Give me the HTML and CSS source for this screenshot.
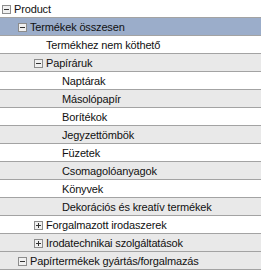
FILE: index.html
```html
<!DOCTYPE html>
<html lang="hu">
<head>
  <meta charset="UTF-8" />
  <title>Product</title>
  <link rel="stylesheet" href="styles.css">
</head>
<body>
  <div class="tree">
    <div class="row lvl-0"><span class="toggle minus"></span><span class="label">Product</span></div>
    <div class="row lvl-1 selected"><span class="toggle minus"></span><span class="label">Termékek összesen</span></div>
    <div class="row lvl-2 leaf"><span class="label">Termékhez nem köthető</span></div>
    <div class="row lvl-2 alt"><span class="toggle minus"></span><span class="label">Papíráruk</span></div>
    <div class="row lvl-3 leaf"><span class="label">Naptárak</span></div>
    <div class="row lvl-3 leaf alt"><span class="label">Másolópapír</span></div>
    <div class="row lvl-3 leaf"><span class="label">Borítékok</span></div>
    <div class="row lvl-3 leaf alt"><span class="label">Jegyzettömbök</span></div>
    <div class="row lvl-3 leaf"><span class="label">Füzetek</span></div>
    <div class="row lvl-3 leaf alt"><span class="label">Csomagolóanyagok</span></div>
    <div class="row lvl-3 leaf"><span class="label">Könyvek</span></div>
    <div class="row lvl-3 leaf alt"><span class="label">Dekorációs és kreatív termékek</span></div>
    <div class="row lvl-2"><span class="toggle plus"></span><span class="label">Forgalmazott irodaszerek</span></div>
    <div class="row lvl-2 alt"><span class="toggle plus"></span><span class="label">Irodatechnikai szolgáltatások</span></div>
    <div class="row lvl-1 alt"><span class="toggle minus"></span><span class="label">Papírtermékek gyártás/forgalmazás</span></div>
  </div>
</body>
</html>
```

FILE: styles.css
```css
body {
  margin: 0;
  padding: 0;
  background: #fff;
  font-family: "Liberation Sans", Arial, sans-serif;
  font-size: 11px;
  letter-spacing: -0.15px;
  color: #111;
}
.tree {
  width: 261px;
}
.row {
  display: flex;
  align-items: center;
  height: 17px;
  border-bottom: 1px solid #a3a3a3;
  background: #fff;
  white-space: nowrap;
}
.row.alt {
  background: #e9e9e9;
}
.row.selected {
  background: #9badca;
}
.lvl-0 { padding-left: 2px; }
.lvl-1 { padding-left: 18px; }
.lvl-2 { padding-left: 34px; }
.lvl-3 { padding-left: 50px; }
.lvl-2.leaf { padding-left: 46px; }
.lvl-3.leaf { padding-left: 62px; }
.toggle {
  position: relative;
  box-sizing: border-box;
  width: 9px;
  height: 9px;
  margin-top: 1px;
  margin-right: 3px;
  border: 1px solid #8c8c8c;
  background: #f0f0f0;
  flex: none;
}
.toggle::before,
.toggle::after {
  content: "";
  position: absolute;
  background: #333;
}
.toggle::before {
  left: 1px;
  top: 3px;
  width: 5px;
  height: 1px;
}
.toggle.plus::after {
  left: 3px;
  top: 1px;
  width: 1px;
  height: 5px;
}
.label {
  line-height: 17px;
  padding-top: 1px;
}
```
